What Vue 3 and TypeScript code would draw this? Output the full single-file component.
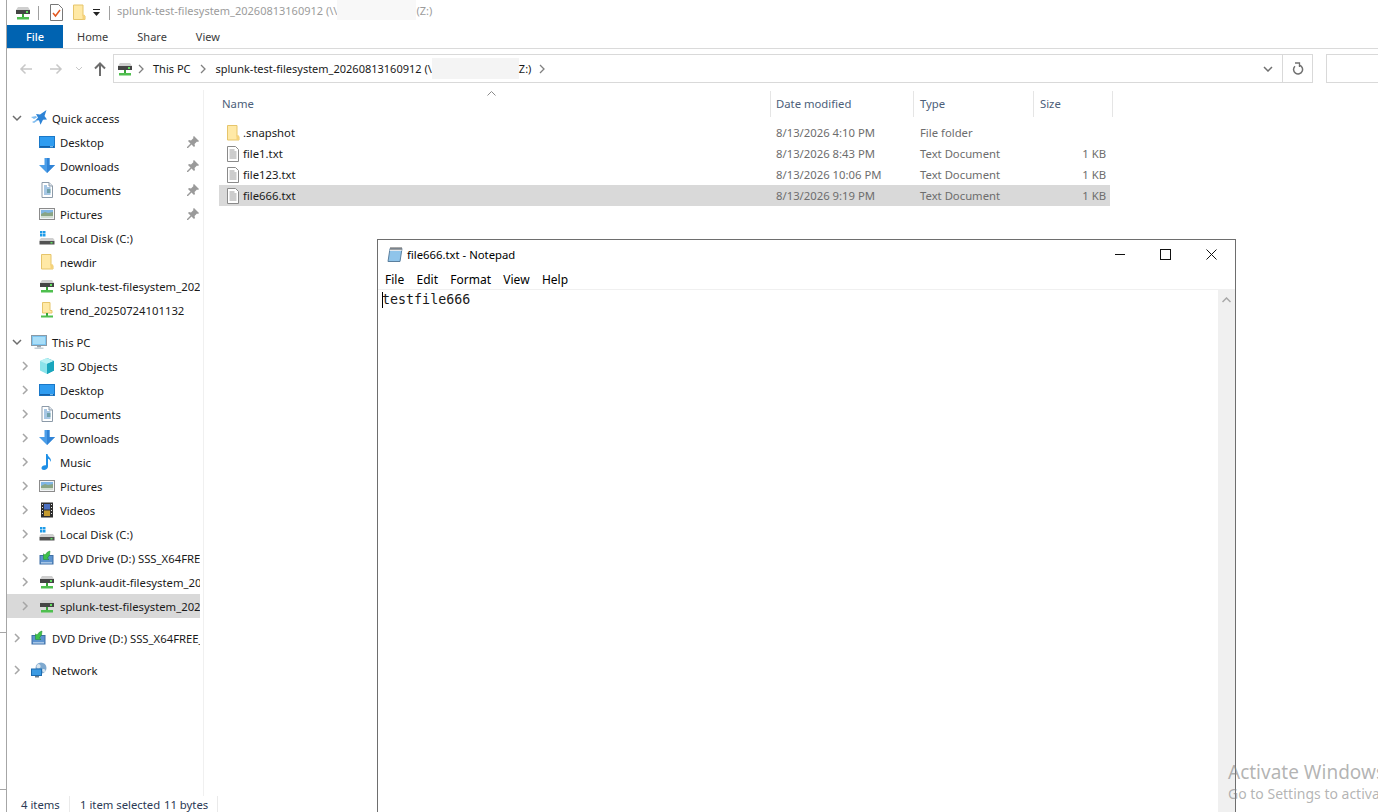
<script setup lang="ts">
interface NavItem {
  label: string
  icon: string
  level: 1 | 2
  chevron?: 'open' | 'closed'
  pinned?: boolean
  selected?: boolean
  gap?: boolean
}

interface FileRow {
  name: string
  icon: string
  date: string
  type: string
  size: string
  selected?: boolean
}

const navItems: NavItem[] = [
  { label: 'Quick access', icon: 'star', level: 1, chevron: 'open' },
  { label: 'Desktop', icon: 'desktop', level: 2, pinned: true },
  { label: 'Downloads', icon: 'download', level: 2, pinned: true },
  { label: 'Documents', icon: 'documents', level: 2, pinned: true },
  { label: 'Pictures', icon: 'pictures', level: 2, pinned: true },
  { label: 'Local Disk (C:)', icon: 'disk', level: 2 },
  { label: 'newdir', icon: 'folder', level: 2 },
  { label: 'splunk-test-filesystem_20260813160912', icon: 'drive', level: 2 },
  { label: 'trend_20250724101132', icon: 'netfolder', level: 2 },
  { label: 'This PC', icon: 'pc', level: 1, chevron: 'open', gap: true },
  { label: '3D Objects', icon: 'cube', level: 2, chevron: 'closed' },
  { label: 'Desktop', icon: 'desktop', level: 2, chevron: 'closed' },
  { label: 'Documents', icon: 'documents', level: 2, chevron: 'closed' },
  { label: 'Downloads', icon: 'download', level: 2, chevron: 'closed' },
  { label: 'Music', icon: 'music', level: 2, chevron: 'closed' },
  { label: 'Pictures', icon: 'pictures', level: 2, chevron: 'closed' },
  { label: 'Videos', icon: 'videos', level: 2, chevron: 'closed' },
  { label: 'Local Disk (C:)', icon: 'disk', level: 2, chevron: 'closed' },
  { label: 'DVD Drive (D:) SSS_X64FREE_EN-US', icon: 'dvd', level: 2, chevron: 'closed' },
  { label: 'splunk-audit-filesystem_20260813', icon: 'drive', level: 2, chevron: 'closed' },
  { label: 'splunk-test-filesystem_20260813160912', icon: 'drive', level: 2, chevron: 'closed', selected: true },
  { label: 'DVD Drive (D:) SSS_X64FREE_EN-US', icon: 'dvd', level: 1, chevron: 'closed', gap: true },
  { label: 'Network', icon: 'network', level: 1, chevron: 'closed', gap: true },
]

const files: FileRow[] = [
  { name: '.snapshot', icon: 'folder', date: '8/13/2026 4:10 PM', type: 'File folder', size: '' },
  { name: 'file1.txt', icon: 'txt', date: '8/13/2026 8:43 PM', type: 'Text Document', size: '1 KB' },
  { name: 'file123.txt', icon: 'txt', date: '8/13/2026 10:06 PM', type: 'Text Document', size: '1 KB' },
  { name: 'file666.txt', icon: 'txt', date: '8/13/2026 9:19 PM', type: 'Text Document', size: '1 KB', selected: true },
]

const menus = ['File', 'Edit', 'Format', 'View', 'Help']
</script>

<template>
  <div class="screen">
    <svg class="defs" width="0" height="0" aria-hidden="true">
      <symbol id="i-drive" viewBox="0 0 16 16">
        <path d="M3 2h10l2 3v1H1V5z" fill="#cfcfcf" />
        <rect x="1" y="5" width="14" height="4" fill="#454545" />
        <rect x="11" y="6" width="2" height="2" fill="#5fe05f" />
        <rect x="7" y="9" width="2" height="3" fill="#39a539" />
        <rect x="2" y="12" width="12" height="2.500" fill="#4fbf4f" />
      </symbol>
      <symbol id="i-folder" viewBox="0 0 16 16">
        <path d="M2.500 .5h9.500v11h2v3.500H2.500z" fill="#ffe9a6" stroke="#e6c56b" />
        <path d="M11.500 10v5h2.500v-4.500z" fill="#f5d27a" />
      </symbol>
      <symbol id="i-netfolder" viewBox="0 0 16 16">
        <path d="M3.500 .5h7.500v8h2v2.500H3.500z" fill="#ffe9a6" stroke="#e6c56b" />
        <rect x="7" y="11" width="2" height="3" fill="#39a539" />
        <rect x="2" y="13.500" width="12" height="2" fill="#4fbf4f" />
      </symbol>
      <symbol id="i-desktop" viewBox="0 0 16 16">
        <rect x=".5" y="2.500" width="15" height="11" fill="#2f9cf0" stroke="#1a78c8" />
        <rect x="1" y="12" width="14" height="1.500" fill="#1560a8" />
        <rect x="11" y="12.200" width="3" height="1" fill="#8ccaf5" />
      </symbol>
      <symbol id="i-download" viewBox="0 0 16 16">
        <path d="M5.500 0h5v7H16l-8 8-8-8h5.500z" fill="#4a9de8" />
        <path d="M8 0h2.500v7H16l-8 8z" fill="#3083d6" />
      </symbol>
      <symbol id="i-documents" viewBox="0 0 16 16">
        <path d="M3 .5h7l3.500 3.500v11.500H3z" fill="#fff" stroke="#8c9aa8" />
        <path d="M10 .5v3.500h3.500" fill="#dfe6ee" stroke="#8c9aa8" />
        <path d="M5 4h3M5 6h6.500M5 8h6.500M5 10h6.500M5 12h6.500" stroke="#4f8ec9" />
        <path d="M8 8h3.500M8 10h3.500" stroke="#3b7a6e" />
      </symbol>
      <symbol id="i-pictures" viewBox="0 0 16 16">
        <rect x=".5" y="2.500" width="15" height="11" fill="#f2f4f6" stroke="#8b8b8b" />
        <rect x="2" y="4" width="12" height="4" fill="#80b6e4" />
        <path d="M2 8l4-2 3 1 5-1v6H2z" fill="#8aa585" />
        <rect x="2" y="10" width="12" height="2" fill="#d3ded2" />
      </symbol>
      <symbol id="i-disk" viewBox="0 0 16 16">
        <path d="M1 1h2.500v2.500H1zM4 1h2.500v2.500H4zM1 4h2.500v2.500H1zM4 4h2.500v2.500H4z" fill="#1e9be8" />
        <path d="M2 8h12l1.500 2v1h-15v-1z" fill="#cfcfcf" />
        <rect x=".5" y="11" width="15" height="3.500" fill="#525252" />
        <rect x="11.500" y="12" width="2" height="1.500" fill="#5fe05f" />
      </symbol>
      <symbol id="i-pc" viewBox="0 0 16 16">
        <rect x=".5" y="1.500" width="15" height="10" fill="#7cc6f2" stroke="#8a9aa6" />
        <rect x="2" y="3" width="12" height="7" fill="#a9def8" />
        <rect x="6" y="12" width="4" height="1.500" fill="#9aa7b0" />
        <rect x="3.500" y="13.500" width="9" height="1.500" fill="#c5ced4" />
      </symbol>
      <symbol id="i-cube" viewBox="0 0 16 16">
        <path d="M8 0l7 3v9.500L8 16z" fill="#1c9fb4" />
        <path d="M8 0L1 3v9.500L8 16z" fill="#8be3ea" />
        <path d="M8 0l7 3-7 3-7-3z" fill="#baf2f4" />
        <path d="M8 6l7-3v9.500L8 16z" fill="#19a6bd" />
      </symbol>
      <symbol id="i-music" viewBox="0 0 16 16">
        <path d="M7 0h1.500c.4 3 4 3.500 3.500 8-.7-2-2-3-3-3.200V12.500C9 14.800 6.800 16 5 16c-1.600 0-2.500-.9-2.500-2 0-1.800 2.200-3 4.500-2.700z" fill="#1e8fe6" />
      </symbol>
      <symbol id="i-videos" viewBox="0 0 16 16">
        <rect x="2" y=".5" width="12" height="15" fill="#2e2e2e" />
        <rect x="5" y="2" width="6" height="5.500" fill="#4a6fc0" />
        <rect x="5" y="8.500" width="6" height="5.500" fill="#c59b2e" />
        <path d="M3 2h1v1H3zM3 5h1v1H3zM3 8h1v1H3zM3 11h1v1H3zM12 2h1v1h-1zM12 5h1v1h-1zM12 8h1v1h-1zM12 11h1v1h-1z" fill="#e8e8e8" />
      </symbol>
      <symbol id="i-dvd" viewBox="0 0 16 16">
        <rect x="1" y="5.500" width="13" height="8.500" fill="#5c93cf" stroke="#3f6fa5" />
        <path d="M2 12h11v1.500H2z" fill="#a8c6e6" />
        <path d="M11 1L8.500 2 6 5 4.500 3.800V9.500h5.500L8.400 8l2.100-3z" fill="#3fc14a" stroke="#1f8a2c" stroke-width=".5" />
      </symbol>
      <symbol id="i-network" viewBox="0 0 16 16">
        <circle cx="10" cy="6" r="5.500" fill="#7fa9cf" />
        <path d="M7 2c2 0 3 1.500 2.500 3S7 7 6 6s-.500-3 1-4zM12 7c1.500 0 2.500.5 2.500 1.500S13 11 12 10s-1-3 0-3z" fill="#d7e4ee" />
        <rect x=".5" y="7" width="10" height="6.500" fill="#3c9be3" stroke="#1e6cb0" />
        <rect x="4" y="14" width="4" height="1.500" fill="#6c7d8c" />
      </symbol>
      <symbol id="i-star" viewBox="0 0 16 16">
        <path d="M15.500 0l-2 6 2.500 3.500-4 .2-2.500 5-1.500-4.500-4 .5 3-3L5 4l4 .5z" fill="#2d83d6" />
        <path d="M0 7l5-1 1 1.500L3 9zM1 12l4-2 1 1-3 2z" fill="#7fbdf0" />
      </symbol>
      <symbol id="i-txt" viewBox="0 0 16 16">
        <path d="M2.500 .5h8l3 3v12h-11z" fill="#fff" stroke="#8a8a8a" />
        <path d="M4.500 4h5M4.500 6h7M4.500 8h7M4.500 10h7M4.500 12h7" stroke="#9a9a9a" />
      </symbol>
      <symbol id="i-notepad" viewBox="0 0 16 16">
        <path d="M3 2.500h12l-2 13H1z" fill="#8fc4ea" stroke="#5b7f9e" />
        <path d="M3 2.500h12l-.4 2.500H2.600z" fill="#e2e8ee" />
        <path d="M4 1v3M6 1v3M8 1v3M10 1v3M12 1v3M14 1v3" stroke="#555" />
      </symbol>
      <symbol id="i-pin" viewBox="0 0 12 12">
        <path d="M7 0l5 5-1 1-1-.5-2.500 2.500.5 2-1 1-2.500-2.500L1 12l-1 0 0-1 3.500-3.500L1 5l1-1 2 .5L6.500 2 6 1z" fill="#9a9a9a" />
      </symbol>
    </svg>

    <div class="explorer">
      <div class="title-row">
        <svg class="ic16 qa-drive"><use href="#i-drive" /></svg>
        <span class="qa-sep"></span>
        <svg class="qa-doc" viewBox="0 0 13 17">
          <path d="M.5.500h8l4 4v12H.5z" fill="#fff" stroke="#777" />
          <path d="M3 9l2.500 3L10 6" fill="none" stroke="#e2571e" stroke-width="1.500" />
        </svg>
        <svg class="qa-folder"><use href="#i-folder" /></svg>
        <svg class="qa-drop" viewBox="0 0 7 7">
          <path d="M0 0h7v1H0zM0 3h7L3.500 7z" fill="#222" />
        </svg>
        <span class="qa-sep second"></span>
        <span class="title-text">splunk-test-filesystem_20260813160912 (\\</span>
        <span class="blur title-blur"></span>
        <span class="title-text">(Z:)</span>
      </div>

      <div class="tabs">
        <div class="tab-file">File</div>
        <div class="tab home">Home</div>
        <div class="tab share">Share</div>
        <div class="tab view">View</div>
      </div>

      <div class="address-row">
        <div class="nav-buttons">
          <svg class="nav-arrow back" viewBox="0 0 14 12"><path d="M13 6H2M6.500 1.500L2 6l4.500 4.500" fill="none" stroke="#c8c8c8" stroke-width="1.500" /></svg>
          <svg class="nav-arrow fwd" viewBox="0 0 14 12"><path d="M1 6h11M7.500 1.500L12 6l-4.500 4.500" fill="none" stroke="#c8c8c8" stroke-width="1.500" /></svg>
          <svg class="nav-drop" viewBox="0 0 8 5"><path d="M1 1l3 3 3-3" fill="none" stroke="#c8c8c8" /></svg>
          <svg class="nav-up" viewBox="0 0 12 14"><path d="M6 14V2M1 6.500L6 1.500l5 5" fill="none" stroke="#6d6d6d" stroke-width="2" /></svg>
        </div>
        <div class="address-box">
          <svg class="ic16"><use href="#i-drive" /></svg>
          <svg class="crumb-chev first" viewBox="0 0 6 10"><path d="M1 1l4 4-4 4" fill="none" stroke="#808080" stroke-width="1.300" /></svg>
          <span class="crumb this-pc">This PC</span>
          <svg class="crumb-chev second" viewBox="0 0 6 10"><path d="M1 1l4 4-4 4" fill="none" stroke="#808080" stroke-width="1.300" /></svg>
          <span class="crumb">splunk-test-filesystem_20260813160912 (\</span>
          <span class="blur addr-blur"></span>
          <span class="crumb">Z:)</span>
          <svg class="crumb-chev last" viewBox="0 0 6 10"><path d="M1 1l4 4-4 4" fill="none" stroke="#808080" stroke-width="1.300" /></svg>
          <svg class="addr-drop" viewBox="0 0 10 6"><path d="M1 1l4 4 4-4" fill="none" stroke="#707070" stroke-width="1.500" /></svg>
          <span class="refresh">
            <svg viewBox="0 0 12 13" width="12" height="13">
              <path d="M7 3.100A4.500 4.500 0 1 1 3 4.200" fill="none" stroke="#707070" stroke-width="1.500" />
              <path d="M3 1h4.500v4" fill="none" stroke="#707070" stroke-width="1.300" />
            </svg>
          </span>
        </div>
        <div class="search-box"></div>
      </div>

      <div class="content">
        <nav class="nav-pane">
          <div
            v-for="(item, i) in navItems"
            :key="i"
            class="nav-row"
            :class="['lvl' + item.level, { selected: item.selected, gap: item.gap }]"
          >
            <span class="chev">
              <svg v-if="item.chevron === 'open'" width="10" height="7" viewBox="0 0 10 7"><path d="M1 1l4 4 4-4" fill="none" stroke="#6d6d6d" stroke-width="1.500" /></svg>
              <svg v-else-if="item.chevron === 'closed'" width="7" height="10" viewBox="0 0 7 10"><path d="M1 1l4 4-4 4" fill="none" stroke="#a6a6a6" stroke-width="1.500" /></svg>
            </span>
            <svg class="ic16 nav-icon"><use :href="'#i-' + item.icon" /></svg>
            <span class="nav-label">{{ item.label }}</span>
            <svg v-if="item.pinned" class="pin"><use href="#i-pin" /></svg>
          </div>
        </nav>

        <section class="list">
          <svg class="sort-arrow" viewBox="0 0 9 5"><path d="M.5 4.500l4-4 4 4" fill="none" stroke="#8a8a8a" /></svg>
          <div class="list-grid head">
            <div class="hcell">Name</div>
            <div class="hcell">Date modified</div>
            <div class="hcell">Type</div>
            <div class="hcell">Size</div>
          </div>
          <div class="rows">
            <div v-for="f in files" :key="f.name" class="list-grid row" :class="{ selected: f.selected }">
              <div class="cell name">
                <svg class="ic16"><use :href="'#i-' + f.icon" /></svg>
                <span>{{ f.name }}</span>
              </div>
              <div class="cell meta">{{ f.date }}</div>
              <div class="cell meta type">{{ f.type }}</div>
              <div class="cell meta size">{{ f.size }}</div>
            </div>
          </div>
        </section>
      </div>

      <footer class="status">
        <span class="st-count">4 items</span>
        <span class="st-sep"></span>
        <span class="st-sel">1 item selected</span>
        <span class="st-bytes">11 bytes</span>
        <span class="st-sep end"></span>
      </footer>
    </div>

    <span class="edge e1"></span>
    <span class="edge e2"></span>

    <div class="notepad">
      <div class="np-title">
        <svg class="ic16 np-icon"><use href="#i-notepad" /></svg>
        <span class="np-name">file666.txt - Notepad</span>
        <div class="np-controls">
          <svg width="10" height="10" viewBox="0 0 10 10"><path d="M0 5.500h10" stroke="#111" /></svg>
          <svg width="11" height="11" viewBox="0 0 11 11"><rect x=".5" y=".5" width="10" height="10" fill="none" stroke="#111" /></svg>
          <svg width="11" height="11" viewBox="0 0 11 11"><path d="M.5.500l10 10M10.500.500l-10 10" stroke="#111" /></svg>
        </div>
      </div>
      <div class="np-menu">
        <span v-for="m in menus" :key="m">{{ m }}</span>
      </div>
      <div class="np-body">
        <div class="np-text"><span class="caret"></span>testfile666</div>
        <div class="np-scroll">
          <svg width="9" height="6" viewBox="0 0 9 6"><path d="M.5 5l4-4 4 4" fill="none" stroke="#a8a8a8" stroke-width="1.500" /></svg>
        </div>
      </div>
    </div>

    <div class="activate">
      <div class="act-1">Activate Windows</div>
      <div class="act-2">Go to Settings to activate Windows.</div>
    </div>
  </div>
</template>

<style scoped>
.screen {
  position: relative;
  width: 1378px;
  height: 812px;
  overflow: hidden;
  background: #fff;
  font-family: "Noto Sans", "Open Sans", sans-serif;
  font-size: 11.3px;
  color: #1a1a1a;
}

.defs {
  position: absolute;
}

.ic16 {
  width: 16px;
  height: 16px;
  flex: none;
}

.explorer {
  margin-left: 6px;
  height: 812px;
  border-left: 1px solid #a6a6a6;
  display: flex;
  flex-direction: column;
}

.title-row {
  height: 25px;
  display: flex;
  align-items: center;
  flex: none;
}

.qa-drive {
  margin-left: 8px;
}

.qa-sep {
  width: 1px;
  height: 14px;
  background: #a0a0a0;
  margin-left: 7px;
}

.qa-sep.second {
  margin-left: 9px;
  margin-right: 7px;
}

.qa-doc {
  width: 13px;
  height: 17px;
  margin-left: 11px;
}

.qa-folder {
  width: 16px;
  height: 19px;
  margin-left: 8px;
}

.qa-drop {
  width: 7px;
  height: 7px;
  margin-left: 6px;
}

.title-text {
  color: #9c9c9c;
  white-space: nowrap;
  font-size: 11px;
  margin-bottom: 5px;
}

.blur {
  display: block;
  flex: none;
}

.title-blur {
  width: 79px;
  height: 20px;
  background: #f8f8f8;
  margin-bottom: 5px;
}

.tabs {
  height: 23px;
  flex: none;
  display: flex;
  align-items: center;
  border-bottom: 1px solid #dadada;
  box-sizing: content-box;
  font-size: 11px;
}

.tab-file {
  width: 56px;
  height: 23px;
  line-height: 23px;
  text-align: center;
  background: #0063b1;
  color: #fff;
  font-weight: 500;
}

.tab {
  color: #3b3b3b;
}

.home {
  margin-left: 14px;
}

.share {
  margin-left: 29px;
}

.view {
  margin-left: 29px;
}

.address-row {
  height: 41px;
  flex: none;
  display: flex;
  align-items: flex-start;
  padding-top: 5px;
  box-sizing: border-box;
}

.nav-buttons {
  width: 106px;
  height: 29px;
  display: flex;
  align-items: center;
  flex: none;
}

.nav-arrow {
  width: 14px;
  height: 12px;
}

.back {
  margin-left: 12px;
}

.fwd {
  margin-left: 16px;
}

.nav-drop {
  width: 8px;
  height: 5px;
  margin-left: 12px;
}

.nav-up {
  width: 12px;
  height: 14px;
  margin-left: 11px;
}

.address-box {
  width: 1200px;
  height: 29px;
  flex: none;
  box-sizing: border-box;
  border: 1px solid #d9d9d9;
  display: flex;
  align-items: center;
  padding-left: 3px;
}

.crumb {
  color: #1a1a1a;
  white-space: nowrap;
  font-size: 11px;
}

.crumb-chev {
  width: 6px;
  height: 10px;
  flex: none;
  margin: 0 9px;
}

.crumb-chev.first {
  margin: 0 9px 0 5px;
}

.crumb-chev.second {
  margin-right: 10px;
}

.crumb-chev.last {
  margin-left: 8px;
}

.addr-blur {
  width: 87px;
  height: 21px;
  background: #f4f4f4;
}

.addr-drop {
  width: 10px;
  height: 6px;
  margin-left: auto;
  margin-right: 9px;
}

.refresh {
  width: 29px;
  height: 27px;
  flex: none;
  border-left: 1px solid #d9d9d9;
  display: flex;
  align-items: center;
  justify-content: center;
}

.search-box {
  margin-left: 13px;
  flex: 1;
  height: 29px;
  box-sizing: border-box;
  border: 1px solid #d9d9d9;
  border-right: none;
}

.content {
  flex: 1;
  display: flex;
  min-height: 0;
}

.nav-pane {
  width: 197px;
  flex: none;
  box-sizing: border-box;
  padding: 16px 3px 0 0;
  border-right: 1px solid #f0f0f0;
  overflow: hidden;
}

.nav-row {
  height: 24px;
  display: flex;
  align-items: center;
  overflow: hidden;
}

.nav-row.gap {
  margin-top: 8px;
}

.nav-row.selected {
  background: #d9d9d9;
}

.lvl1 {
  padding-left: 2px;
}

.lvl2 {
  padding-left: 10px;
}

.chev {
  width: 16px;
  height: 16px;
  flex: none;
  display: flex;
  align-items: center;
  justify-content: center;
}

.nav-icon {
  margin-left: 6px;
}

.nav-label {
  margin-left: 5px;
  white-space: nowrap;
}

.pin {
  width: 12px;
  height: 12px;
  flex: none;
  position: absolute;
  left: 187px;
}

.list {
  position: relative;
  padding-left: 15px;
  flex: 1;
}

.sort-arrow {
  position: absolute;
  left: 283px;
  top: 1px;
  width: 9px;
  height: 5px;
}

.list-grid {
  display: grid;
  grid-template-columns: 551px 144px 120px 76px;
  width: 891px;
}

.head {
  width: 895px;
  grid-template-columns: 551px 143px 120px 80px;
  height: 25px;
  margin-top: 1px;
}

.hcell {
  color: #4c607a;
  line-height: 26px;
  padding-left: 6px;
  border-left: 1px solid #e5e5e5;
}

.hcell:first-child {
  border-left: none;
  padding-left: 3px;
}

.hcell:nth-child(2) {
  padding-left: 5px;
}

.hcell:last-child {
  border-right: 1px solid #e5e5e5;
}

.rows {
  margin-top: 6px;
}

.row {
  height: 21px;
  align-items: center;
}

.row.selected {
  background: #d9d9d9;
}

.cell {
  white-space: nowrap;
}

.name {
  display: flex;
  align-items: center;
  gap: 2px;
  padding-left: 6px;
}

.meta {
  color: #6d6d6d;
  padding-left: 6px;
}

.type {
  padding-left: 6px;
}

.size {
  text-align: right;
  padding-right: 4px;
}

.status {
  height: 16px;
  flex: none;
  display: flex;
  align-items: center;
  color: #2b3a55;
}

.st-count {
  margin-left: 14px;
  width: 48px;
}

.st-sep {
  width: 1px;
  height: 16px;
  background: #eaeaea;
}

.st-sel {
  margin-left: 10px;
  width: 84px;
}

.st-bytes {
  width: 53px;
}

.edge {
  position: absolute;
  left: 0;
  width: 6px;
  height: 1px;
  background: #a6a6a6;
}

.e1 {
  top: 632px;
}

.e2 {
  top: 789px;
}

.notepad {
  position: absolute;
  left: 377px;
  top: 239px;
  width: 859px;
  height: 573px;
  box-sizing: border-box;
  border: 1px solid #6e6e6e;
  border-bottom: none;
  background: #fff;
  display: flex;
  flex-direction: column;
  font-size: 12px;
  color: #000;
}

.np-title {
  height: 28px;
  flex: none;
  display: flex;
  align-items: center;
  padding-left: 9px;
}

.np-name {
  margin-left: 4px;
  font-size: 11.3px;
}

.np-controls {
  margin-left: auto;
  display: flex;
  align-items: center;
  gap: 35px;
  margin-right: 18px;
}

.np-menu {
  height: 22px;
  flex: none;
  box-sizing: border-box;
  display: flex;
  align-items: center;
  gap: 12.3px;
  padding: 1px 0 0 7px;
  border-bottom: 1px solid #f0f0f0;
}

.np-body {
  flex: 1;
  display: flex;
  min-height: 0;
}

.np-text {
  flex: 1;
  position: relative;
  padding: 2px 0 0 4px;
  font-family: "DejaVu Sans Mono", "Liberation Mono", monospace;
  font-size: 13.33px;
  line-height: 16px;
  color: #1a1a1a;
}

.caret {
  position: absolute;
  left: 4px;
  top: 2px;
  width: 1px;
  height: 16px;
  background: #000;
}

.np-scroll {
  width: 17px;
  flex: none;
  background: #f0f0f0;
  display: flex;
  justify-content: center;
  padding-top: 7px;
  box-sizing: border-box;
}

.np-scroll svg {
  display: block;
}

.activate {
  position: absolute;
  left: 1228px;
  top: 760px;
  width: 300px;
  white-space: nowrap;
  color: rgba(130, 130, 130, 0.6);
}

.act-1 {
  font-size: 19px;
  line-height: 24px;
}

.act-2 {
  font-size: 14px;
  line-height: 20px;
}
</style>

<style>
html,
body {
  margin: 0;
  overflow: hidden;
}
</style>
